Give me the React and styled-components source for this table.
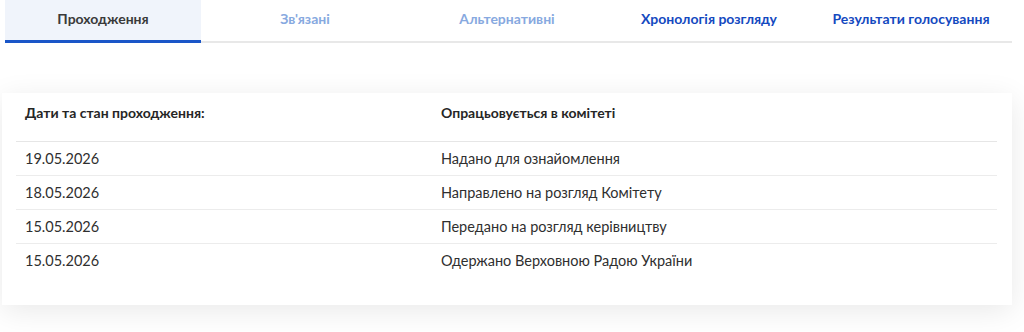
import React from "react";
import styled, { createGlobalStyle } from "styled-components";

const Global = createGlobalStyle`
  html, body { margin: 0; padding: 0; background: #fff; }
  body { font-family: Lato, "Noto Sans", sans-serif; color: #2b2b2b; }
`;

const Page = styled.div`
  width: 1024px;
  height: 332px;
  overflow: hidden;
  background: #fff;
`;

const Tabs = styled.nav`
  display: flex;
  gap: 6px;
  margin: 0 12px 0 5px;
  border-bottom: 2px solid #e8e8e8;
`;

const Tab = styled.div`
  width: 196px;
  height: 43px;
  display: flex;
  align-items: center;
  justify-content: center;
  padding-bottom: 4px;
  box-sizing: border-box;
  font-size: 14px;
  font-weight: 700;
  background: ${(p) => (p.$active ? "#f0f4fb" : "transparent")};
  color: ${(p) => (p.$active ? "#3a3a3a" : p.$disabled ? "#87a9e0" : "#1449bf")};
  border-bottom: 3px solid ${(p) => (p.$active ? "#1a56c8" : "transparent")};
  margin-bottom: -2px;
`;

const Card = styled.section`
  margin: 50px 12px 0 2px;
  background: #fff;
  box-shadow: 0 6px 28px rgba(0, 0, 0, 0.09);
  padding: 0 15px 28px 14px;
`;

const Table = styled.table`
  width: 100%;
  border-collapse: collapse;
  font-size: 14px;
`;

const Th = styled.th`
  text-align: left;
  font-weight: 700;
  line-height: 18px;
  padding: 11px 9px 19px;
  border-bottom: 1px solid #e6e6e6;
  color: #262626;
  width: ${(p) => p.$w || "auto"};
`;

const Td = styled.td`
  line-height: 18px;
  font-size: 14.5px;
  padding: 8px 9px 7px;
  color: #2f2f2f;
`;

const Tr = styled.tr`
  & + & td { border-top: 1px solid #ececec; }
`;

const rows = [
  ["19.05.2026", "Надано для ознайомлення"],
  ["18.05.2026", "Направлено на розгляд Комітету"],
  ["15.05.2026", "Передано на розгляд керівництву"],
  ["15.05.2026", "Одержано Верховною Радою України"],
];

export default function App() {
  return (
    <Page>
      <Global />
      <Tabs>
        <Tab $active>Проходження</Tab>
        <Tab $disabled>Зв'язані</Tab>
        <Tab $disabled>Альтернативні</Tab>
        <Tab>Хронологія розгляду</Tab>
        <Tab>Результати голосування</Tab>
      </Tabs>
      <Card>
        <Table>
          <thead>
            <tr>
              <Th $w="398px">Дати та стан проходження:</Th>
              <Th>Опрацьовується в комітеті</Th>
            </tr>
          </thead>
          <tbody>
            {rows.map(([d, s], i) => (
              <Tr key={i}>
                <Td>{d}</Td>
                <Td>{s}</Td>
              </Tr>
            ))}
          </tbody>
        </Table>
      </Card>
    </Page>
  );
}
